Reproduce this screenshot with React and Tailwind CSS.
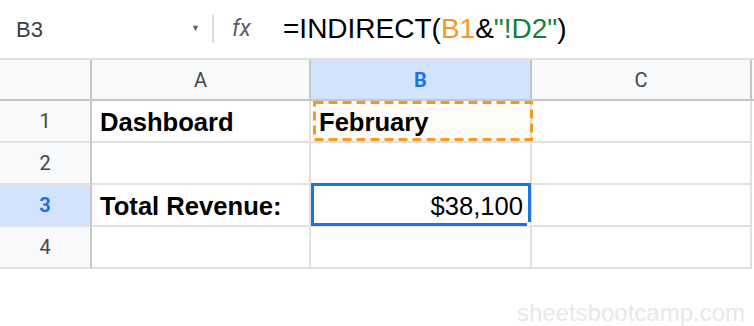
import React from 'react';

const cols = [
  { key: 'A', w: 'w-[219px]' },
  { key: 'B', w: 'w-[221px]' },
  { key: 'C', w: 'w-[220px]' },
];

const rows = [
  { n: 1, A: 'Dashboard', B: 'February' },
  { n: 2 },
  { n: 3, A: 'Total Revenue:', B: '$38,100' },
  { n: 4 },
];

const cellFont = { fontFamily: '"Liberation Sans", Arial, sans-serif' };

export default function App() {
  return (
    <div className="w-[754px] h-[326px] bg-white overflow-hidden relative" style={cellFont}>
      {/* formula bar */}
      <div className="h-[60px] flex items-center border-b-2 border-[#e1e1e1]">
        <div className="w-[212px] flex items-center pl-4 pr-[12px]">
          <span className="text-[22px] text-[#3c4043] flex-1">B3</span>
          <span className="text-[#5f6368] text-[9px]">▼</span>
        </div>
        <div className="w-[2px] h-[28px] bg-[#dadce0]" />
        <span className="ml-[18px] w-[51px] text-[23px] italic text-[#5f6368]" style={{ fontFamily: 'Roboto, sans-serif' }}>fx</span>
        <span className="text-[28px] text-black">
          =INDIRECT(<span className="text-[#f5982a]">B1</span>&amp;<span className="text-[#188038]">"!D2"</span>)
        </span>
      </div>

      {/* column header */}
      <div className="flex h-[41px] bg-[#f8f9fa] border-b-2 border-[#c4c7c5]" style={{ fontFamily: 'Roboto, sans-serif' }}>
        <div className="w-[92px] border-r-2 border-[#c4c7c5]" />
        {cols.map((c) => (
          <div
            key={c.key}
            className={`${c.w} flex items-center justify-center border-r-2 border-[#c4c7c5] text-[20px] ${c.key === 'B' ? 'bg-[#d3e3fd] text-[#1a73e8] font-bold' : 'text-[#444746]'}`}
          >
            {c.key}
          </div>
        ))}
      </div>

      {/* rows */}
      {rows.map((r) => (
        <div key={r.n} className="flex h-[42px]">
          <div
            className={`w-[92px] flex items-center justify-center border-r-2 border-b-2 border-r-[#c4c7c5] border-b-[#e1e1e1] text-[20px] ${r.n === 3 ? 'bg-[#d3e3fd] text-[#1a73e8] font-bold' : 'bg-[#f8f9fa] text-[#444746]'}`}
            style={{ fontFamily: 'Roboto, sans-serif' }}
          >
            {r.n}
          </div>
          <div className="w-[219px] flex items-center px-2 pt-[3px] border-r-2 border-b-2 border-[#e1e1e1] text-[25.6px] font-bold text-black">
            {r.A}
          </div>
          <div
            className={`w-[221px] relative flex items-center pl-2 pr-[7px] pt-[3px] border-r-2 border-b-2 border-[#e1e1e1] text-[25.6px] text-black ${r.n === 3 ? 'justify-end' : ''} ${r.n === 1 ? 'font-bold bg-[#fefcf6]' : ''}`}
          >
            {r.B}
            {r.n === 1 && (
              <svg className="absolute left-[2px] top-0" width="220" height="40" viewBox="0 0 220 40">
                <rect x="1.5" y="1.5" width="217" height="37" fill="none" stroke="#f5982a" strokeWidth="3" strokeDasharray="9 5" />
              </svg>
            )}
            {r.n === 3 && (
              <div className="absolute left-0 right-[-1px] top-[-2px] bottom-[-1px] border-[3px] border-[#1a73e8]">
                <div className="absolute right-[-3px] bottom-[-3px] w-[4px] h-[4px] bg-white" />
              </div>
            )}
          </div>
          <div className="w-[220px] border-r-2 border-b-2 border-[#e1e1e1]" />
        </div>
      ))}

      {/* watermark */}
      <div className="flex justify-end pr-[9px] pt-[26px]">
        <span className="text-[24px] text-[#e8e8e8]">sheetsbootcamp.com</span>
      </div>
    </div>
  );
}
